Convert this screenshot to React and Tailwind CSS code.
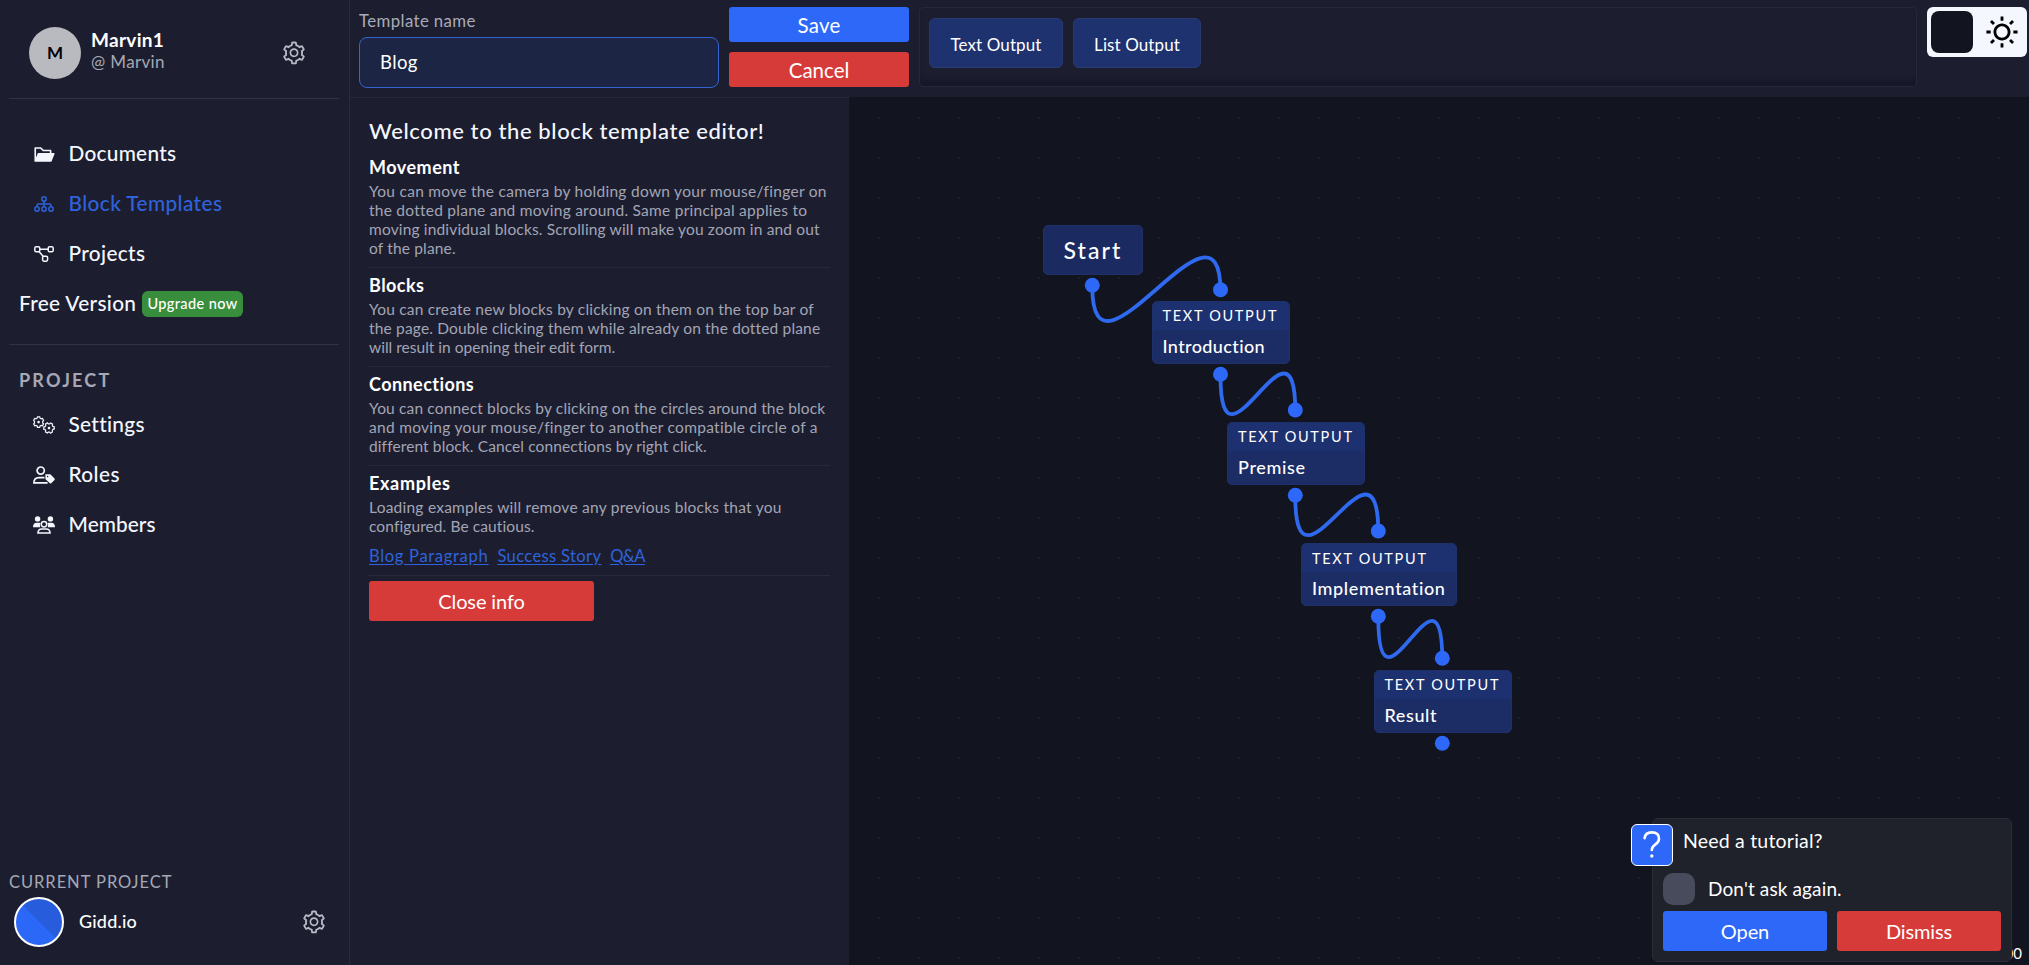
import { AiFillFolderOpen, AiOutlineSetting } from "react-icons/ai";
import { RiSunLine } from "react-icons/ri";

function SitemapIcon() {
  return (
    <svg width="20" height="16" viewBox="0 0 20 16" fill="none" stroke="currentColor" strokeWidth="1.5">
      <circle cx="10" cy="3" r="2.2" />
      <circle cx="3" cy="13" r="2.2" />
      <circle cx="10" cy="13" r="2.2" />
      <circle cx="17" cy="13" r="2.2" />
      <path d="M10 5.2v5.6M3 10.8V9.6Q3 8 4.6 8h10.8Q17 8 17 9.6v1.2" />
    </svg>
  );
}

function DiagramIcon() {
  return (
    <svg width="20" height="16" viewBox="0 0 20 16" fill="none" stroke="currentColor" strokeWidth="1.5">
      <rect x="0.8" y="0.8" width="5" height="5" rx="1.4" />
      <rect x="14.2" y="0.8" width="5" height="5" rx="1.4" />
      <rect x="8.6" y="10.2" width="5" height="5" rx="1.4" />
      <path d="M5.8 3.3h8.4M5 5.6l4.4 5" />
    </svg>
  );
}

const gearPath =
  "M-1.1 -5.2h2.2l.4 1.3 1.1.6 1.3-.4 1.1 1.9-.9 1v1.6l.9 1-1.1 1.9-1.3-.4-1.1.6-.4 1.3h-2.2l-.4-1.3-1.1-.6-1.3.4-1.1-1.9.9-1v-1.6l-.9-1 1.1-1.9 1.3.4 1.1-.6z";

function CogsIcon() {
  return (
    <svg width="22" height="18" viewBox="0 0 22 18" fill="none" stroke="currentColor" strokeWidth="1.2">
      <g transform="translate(5.6 6.1)">
        <path d={gearPath} />
        <circle r="1.3" fill="currentColor" stroke="none" />
      </g>
      <g transform="translate(16 12) rotate(30)">
        <path d={gearPath} />
        <circle r="1.3" fill="currentColor" stroke="none" />
      </g>
    </svg>
  );
}

function UserTagIcon() {
  return (
    <svg width="22" height="18" viewBox="0 0 22 18" fill="none" stroke="currentColor" strokeWidth="1.7">
      <circle cx="7.7" cy="4.6" r="3.6" />
      <path d="M11.5 11.6H6Q1 11.6 .9 16.9H14.6" />
      <path d="M12.4 8.2h4.3q.5 0 .9.4l3.9 3.9q.6.7 0 1.4l-3.3 3.4q-.6.5-1.3 0L12.8 13.4q-.4-.4-.4-.9z" fill="currentColor" stroke="none" />
      <circle cx="14.6" cy="10.5" r=".7" fill="#1c1e30" stroke="none" />
    </svg>
  );
}

function UsersIcon() {
  return (
    <svg width="22" height="18" viewBox="0 0 22 18" fill="currentColor">
      <circle cx="4.6" cy="2.9" r="2.7" />
      <circle cx="17.4" cy="2.9" r="2.7" />
      <path d="M0 11.2Q0 6.7 3.6 6.7h2.6q.8 0 1.4.4Q6.4 9 7.2 11.2zM22 11.2Q22 6.7 18.4 6.7h-2.6q-.8 0-1.4.4Q15.6 9 14.8 11.2z" />
      <g fill="none" stroke="currentColor" strokeWidth="1.5">
        <circle cx="11" cy="8.2" r="2.7" />
        <path d="M4.9 17.1q.2-4.1 3.9-4.1h4.4q3.7 0 3.9 4.1z" />
      </g>
    </svg>
  );
}

function NavItem({ icon, active, children }) {
  return (
    <a className={`flex h-[50px] items-center text-[20.8px] font-medium ${active ? "text-[#2f62dc]" : "text-[#f5f7ff]"}`}>
      <span className="flex w-[36.5px] justify-start">
        <span className="flex w-[24px] justify-center">{icon}</span>
      </span>
      <span className="pb-[2px]">{children}</span>
    </a>
  );
}

function Section({ title, lines, children }) {
  return (
    <section className="border-b border-[#282a3b] pt-1 pb-[9px]">
      <h3 className="pl-0.5 text-[18px] leading-[26px] font-bold text-white">{title}</h3>
      <p className="mt-0.5 pl-0.5 text-[15.5px] leading-[19px] text-[#a3a5b4]">{lines}</p>
      {children}
    </section>
  );
}

function Line({ className, children }) {
  return <span className={`block whitespace-nowrap ${className}`}>{children}</span>;
}

function Block({ className, children }) {
  return (
    <div className={`absolute h-[63px] overflow-hidden rounded-[5px] border border-[#1f316a] bg-[#1c2c65] ${className}`}>
      <div className="flex h-[28px] items-center bg-[#1d3070] pt-px pl-[10px] text-[14.5px] tracking-[1.7px] whitespace-nowrap">
        TEXT OUTPUT
      </div>
      <div className="flex h-[34px] items-center pb-px pl-[10px] text-[18px] font-medium whitespace-nowrap">{children}</div>
    </div>
  );
}

const dots = [
  [243.3, 188.3], [371.5, 192.7], [371.5, 277.3], [446.3, 313], [446.3, 398.3],
  [529.3, 434], [529.3, 519.3], [593.3, 561.3], [593.3, 646.3],
];

const links = [
  [243.3, 190, 371.5, 194.4],
  [371.5, 279, 446.3, 314.7],
  [446.3, 400, 529.3, 435.7],
  [529.3, 521, 593.3, 563],
];

export default function App() {
  return (
    <div className="flex h-[965px] w-[2029px] overflow-hidden bg-[#1c1e30] font-['Lato',sans-serif] text-white">
      <aside className="flex w-[350px] flex-col border-r border-[#272b3c] pr-[10px] pl-[9px]">
        <div className="flex h-[99px] items-center border-b border-[#303344] pb-2 pl-5">
          <div className="mt-4 flex size-[52px] shrink-0 items-center justify-center rounded-full bg-[#b9bac0] text-[17px] font-bold text-black">M</div>
          <div className="mt-2.5 ml-[10px] flex w-[190px] flex-col">
            <span className="text-[19px] leading-[23px] font-bold tracking-[0.3px]">Marvin1</span>
            <span className="text-[17px] leading-[22px] tracking-[0.35px] text-[#a6a8b5]">@ Marvin</span>
          </div>
          <AiOutlineSetting className="mt-4 shrink-0 text-[#b9bac5]" size={26} />
        </div>
        <nav className="flex flex-col pt-[30px] pl-[23px]">
          <NavItem icon={<AiFillFolderOpen size={23} />}><span className="tracking-[0.27px]">Documents</span></NavItem>
          <NavItem active icon={<SitemapIcon />}><span className="tracking-[0.4px]">Block Templates</span></NavItem>
          <NavItem icon={<DiagramIcon />}><span className="tracking-[0.35px]">Projects</span></NavItem>
        </nav>
        <div className="flex h-[50px] items-center pl-[10px]">
          <span className="w-[123px] pb-[2px] text-[20.8px] font-medium tracking-[0.33px] whitespace-nowrap text-[#f5f7ff]">Free Version</span>
          <span className="flex h-[26px] w-[101px] items-center justify-center rounded-md bg-[#388e3c] text-[14.5px] font-medium tracking-[0.4px]">Upgrade now</span>
        </div>
        <div className="mt-[15px] border-t border-[#303344] pt-[24px] pl-[10px]">
          <h2 className="text-[18px] leading-[22px] font-bold tracking-[2.2px] text-[#a6a8b5]">PROJECT</h2>
        </div>
        <nav className="flex flex-col pt-[9px] pl-[23px]">
          <NavItem icon={<CogsIcon />}><span className="tracking-[0.31px]">Settings</span></NavItem>
          <NavItem icon={<UserTagIcon />}><span className="tracking-[0.42px]">Roles</span></NavItem>
          <NavItem icon={<UsersIcon />}><span className="tracking-[0.06px]">Members</span></NavItem>
        </nav>
        <div className="mt-auto pb-[18px]">
          <h2 className="mb-[5px] text-[16.5px] leading-[20px] tracking-[0.95px] text-[#a6a8b5]">CURRENT PROJECT</h2>
          <div className="flex items-center pl-[5px]">
            <div className="size-[50px] shrink-0 rounded-full border-2 border-white bg-[linear-gradient(45deg,#2b68f7_50%,#275cdc_50%)]" />
            <span className="ml-[15px] w-[222px] pb-[2px] text-[18px] font-medium tracking-[0.2px]">Gidd.io</span>
            <AiOutlineSetting className="shrink-0 text-[#b9bac5]" size={26} />
          </div>
        </div>
      </aside>

      <div className="flex min-w-0 flex-1 flex-col">
        <header className="flex h-[97px] pt-[7px] pl-[9px]">
          <div className="flex w-[360px] flex-col">
            <label className="flex h-[30px] items-center pb-0.5 text-[16.8px] tracking-[0.4px] text-[#a9abb8]">Template name</label>
            <div className="flex h-[51px] items-center rounded-lg border border-[#3763d2] bg-[#1c2644] pl-[20px] text-[18.5px] tracking-[0.4px]">Blog</div>
          </div>
          <div className="ml-[10px] flex w-[180px] flex-col gap-[10px]">
            <button className="h-[35px] rounded-[3px] bg-[#2d68f8] text-[20.5px] leading-[34px] tracking-[0.2px]">Save</button>
            <button className="h-[35px] rounded-[3px] bg-[#d63b3a] text-[20.5px] leading-[34px]">Cancel</button>
          </div>
          <div className="ml-[10px] flex h-[80px] w-[998px] gap-[10px] rounded-[4px] border border-[#262838] pt-[10px] pl-[9px] shadow-[inset_0_-9px_5px_-3px_#161829]">
            <button className="h-[50px] w-[134px] rounded-md border border-[#293a72] bg-[#1e326f] pt-[3px] text-[17px] tracking-[0.1px]">Text Output</button>
            <button className="h-[50px] w-[128px] rounded-md border border-[#293a72] bg-[#1e326f] pt-[3px] text-[17px] tracking-[0.1px]">List Output</button>
          </div>
          <div className="ml-[10px] flex h-[50px] w-[100px] items-center rounded-md bg-[#f5f7ff] p-1">
            <div className="size-[42px] rounded-lg bg-[#12141f]" />
            <RiSunLine className="ml-3 text-black" size={34} />
          </div>
        </header>

        <div className="flex flex-1">
          <div className="w-[499px] border-t border-[#272a3a] pt-[18px] pr-[19px] pl-[17px]">
            <h1 className="h-[34px] pl-0.5 text-[22px] leading-[29px] font-medium tracking-[0.61px] whitespace-nowrap text-[#f5f7ff]">
              Welcome to the block template editor!
            </h1>
            <Section
              title={<span className="tracking-[0.5px]">Movement</span>}
              lines={
                <>
                  <Line className="tracking-[0.28px]">You can move the camera by holding down your mouse/finger on</Line>
                  <Line className="tracking-[0.25px]">the dotted plane and moving around. Same principal applies to</Line>
                  <Line className="tracking-[0.16px]">moving individual blocks. Scrolling will make you zoom in and out</Line>
                  <Line className="tracking-[0.16px]">of the plane.</Line>
                </>
              }
            />
            <Section
              title={<span className="tracking-[0.44px]">Blocks</span>}
              lines={
                <>
                  <Line className="tracking-[0.2px]">You can create new blocks by clicking on them on the top bar of</Line>
                  <Line className="tracking-[0.17px]">the page. Double clicking them while already on the dotted plane</Line>
                  <Line className="tracking-[0.01px]">will result in opening their edit form.</Line>
                </>
              }
            />
            <Section
              title={<span className="tracking-[0.44px]">Connections</span>}
              lines={
                <>
                  <Line className="tracking-[0.16px]">You can connect blocks by clicking on the circles around the block</Line>
                  <Line className="tracking-[0.29px]">and moving your mouse/finger to another compatible circle of a</Line>
                  <Line className="tracking-[0.11px]">different block. Cancel connections by right click.</Line>
                </>
              }
            />
            <Section
              title={<span className="tracking-[0.68px]">Examples</span>}
              lines={
                <>
                  <Line className="tracking-[0.24px]">Loading examples will remove any previous blocks that you</Line>
                  <Line className="tracking-[0.1px]">configured. Be cautious.</Line>
                </>
              }
            >
              <div className="mt-[10px] flex h-[20px] items-center gap-[9px] pl-0.5 text-[16.6px] whitespace-nowrap text-[#2f62dc] underline underline-offset-2">
                <a className="tracking-[0.66px]">Blog Paragraph</a>
                <a className="tracking-[0.33px]">Success Story</a>
                <a className="tracking-[-0.8px]">Q&amp;A</a>
              </div>
            </Section>
            <button className="mt-[5px] ml-0.5 h-[40px] w-[225px] rounded-[3px] bg-[#d63b3a] pb-px text-[20px] tracking-[-0.12px]">Close info</button>
          </div>

          <main className="relative flex-1 overflow-hidden bg-[#12141f] bg-[radial-gradient(circle,#1c1f2a_1px,transparent_1.5px)] bg-size-[40px_40px] bg-position-[10px_1px]">
            <svg className="absolute inset-0" width="1180" height="868" fill="none" stroke="#2f69ee" strokeWidth="3.8">
              {links.map(([x1, y1, x2, y2]) => (
                <path key={x1} d={`M${x1} ${y1}C${x1} ${y1 + 116} ${x2} ${y2 - 116} ${x2} ${y2}`} />
              ))}
              {dots.map(([x, y]) => (
                <circle key={`${x}-${y}`} cx={x} cy={y} r="7.5" fill="#2d68f8" stroke="none" />
              ))}
            </svg>
            <div className="absolute top-[127.5px] left-[193.5px] flex h-[50px] w-[100px] items-center justify-center rounded-[5px] border border-[#1f316a] bg-[#1b2b62] pt-px pl-px text-[23px] font-medium tracking-[2.1px]">
              Start
            </div>
            <Block className="top-[203.5px] left-[302.5px] w-[138px]"><span className="tracking-[0.38px]">Introduction</span></Block>
            <Block className="top-[324.5px] left-[378px] w-[137.5px]"><span className="tracking-[0.65px]">Premise</span></Block>
            <Block className="top-[446px] left-[452px] w-[155.5px]"><span className="tracking-[0.62px]">Implementation</span></Block>
            <Block className="top-[572.5px] left-[524.5px] w-[138px]"><span className="tracking-[0.6px]">Result</span></Block>

            <span className="absolute right-[7px] bottom-[3px] text-[15px] leading-[18px]">00</span>
            <div className="absolute right-[17px] bottom-[3px] flex h-[144px] w-[360px] flex-col rounded-md border border-[#2a2c37] bg-[#1f212b] px-[10px] pt-[10px]">
              <div className="absolute top-[5px] -left-[22px] flex size-[42px] items-center justify-center rounded-md border border-white bg-[#2d68f8]">
                <svg width="20" height="30" viewBox="0 0 20 30" fill="none" stroke="white" strokeWidth="2.6" strokeLinecap="round">
                  <path d="M2.6 8.2Q3.2 2.4 9.8 2.4Q17 2.4 17 8.8Q17 12.2 13.2 14.6Q9.8 16.8 9.8 20" />
                  <circle cx="9.8" cy="26" r="1.7" fill="white" stroke="none" />
                </svg>
              </div>
              <span className="pl-[20px] text-[19.5px] leading-[24px] tracking-[0.2px]">Need a tutorial?</span>
              <div className="mt-5 flex h-[32px] items-center">
                <span className="size-[32px] rounded-[10px] bg-[#484b5b]" />
                <span className="ml-[13px] text-[19px] tracking-[0.13px]">Don't ask again.</span>
              </div>
              <div className="mt-1.5 flex gap-[10px]">
                <button className="h-[40px] w-[164px] rounded-[3px] bg-[#2d68f8] pb-px text-[20px] tracking-[-0.08px]">Open</button>
                <button className="h-[40px] w-[164px] rounded-[3px] bg-[#d63b3a] pb-px text-[20px] tracking-[-0.14px]">Dismiss</button>
              </div>
            </div>
          </main>
        </div>
      </div>
    </div>
  );
}
